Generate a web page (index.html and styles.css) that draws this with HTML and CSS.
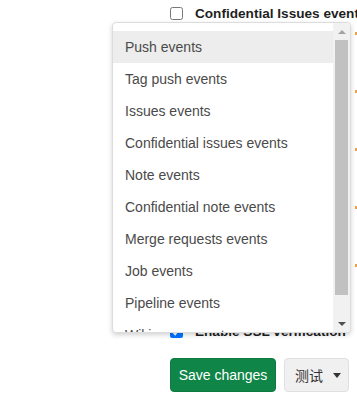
FILE: index.html
```html
<!DOCTYPE html>
<html>
<head>
<meta charset="utf-8">
<link rel="stylesheet" href="styles.css">
</head>
<body>
<div class="page">
  <div class="form">
    <label class="check-row">
      <input type="checkbox" class="cb">
      <span class="check-label">Confidential Issues events</span>
    </label>
    <div class="behind">
      <span class="mark"></span>
      <span class="mark"></span>
      <span class="mark"></span>
      <span class="mark"></span>
      <span class="mark"></span>
    </div>
    <label class="check-row ssl">
      <input type="checkbox" class="cb" checked>
      <span class="check-label">Enable SSL verification</span>
    </label>
    <div class="actions">
      <button class="btn btn-save">Save changes</button>
      <button class="btn btn-test"><span class="zh">测试</span><span class="caret"></span></button>
    </div>
  </div>

  <div class="popup">
    <ul class="list">
      <li class="item active">Push events</li>
      <li class="item">Tag push events</li>
      <li class="item">Issues events</li>
      <li class="item">Confidential issues events</li>
      <li class="item">Note events</li>
      <li class="item">Confidential note events</li>
      <li class="item">Merge requests events</li>
      <li class="item">Job events</li>
      <li class="item">Pipeline events</li>
      <li class="item">Wiki page events</li>
    </ul>
    <div class="scrollbar">
      <div class="sb-btn"><span class="arrow-up"></span></div>
      <div class="sb-track"><div class="sb-thumb"></div></div>
      <div class="sb-btn"><span class="arrow-down"></span></div>
    </div>
  </div>
</div>
</body>
</html>
```

FILE: styles.css
```css
html, body {
  margin: 0;
  padding: 0;
  background: #fff;
}
body {
  font-family: "Liberation Sans", Arial, sans-serif;
  font-size: 14px;
  color: #333;
  overflow: hidden;
  width: 357px;
  height: 400px;
}
.page {
  position: relative;
  width: 357px;
  height: 400px;
  overflow: hidden;
}
.form {
  display: flex;
  flex-direction: column;
  padding: 6px 0 0 170px;
}
.check-row {
  display: flex;
  align-items: center;
  gap: 12px;
  height: 14px;
  white-space: nowrap;
}
.cb {
  width: 13px;
  height: 13px;
  margin: 0;
  flex: none;
}
.check-label {
  font-weight: bold;
  color: #1f1f1f;
  font-size: 13.6px;
}
.behind {
  height: 304px;
  display: flex;
  flex-direction: column;
  align-items: flex-end;
  padding-top: 12px;
  gap: 55px;
  box-sizing: border-box;
}
.mark {
  width: 2px;
  height: 3px;
  background: #f0a040;
}
.actions {
  display: flex;
  gap: 8px;
  margin-top: 20px;
}
.btn {
  font-family: "Liberation Sans", Arial, sans-serif;
  font-size: 14px;
  height: 34px;
  border-radius: 4px;
  box-sizing: border-box;
  padding: 0;
  display: flex;
  align-items: center;
  white-space: nowrap;
  cursor: pointer;
}
.btn-save {
  background: #108548;
  color: #fff;
  border: 1px solid #0e7a41;
  width: 106px;
  justify-content: center;
}
.btn-test {
  background: #f0f0f0;
  color: #333;
  border: 1px solid #e0e0e0;
  width: 65px;
  padding: 0 0 0 10px;
  gap: 10px;
}
.zh {
  font-family: "Noto Sans CJK SC", sans-serif;
  font-size: 14px;
  color: #333;
}
.caret {
  width: 0;
  height: 0;
  border-left: 4px solid transparent;
  border-right: 4px solid transparent;
  border-top: 5px solid #333;
}
.popup {
  position: absolute;
  left: 112px;
  top: 22px;
  width: 239px;
  height: 311px;
  box-sizing: border-box;
  background: #fff;
  border: 1px solid #dcdcdc;
  border-radius: 4px;
  box-shadow: 0 2px 5px rgba(0, 0, 0, 0.18);
  display: flex;
  overflow: hidden;
}
.list {
  list-style: none;
  margin: 0;
  padding: 8px 0 0 0;
  flex: 1;
  overflow: hidden;
}
.item {
  height: 32px;
  line-height: 32px;
  padding-left: 12px;
  color: #4a4a4a;
  white-space: nowrap;
}
.item.active {
  background: #ededed;
}
.scrollbar {
  width: 17px;
  flex: none;
  background: #f1f1f1;
  display: flex;
  flex-direction: column;
}
.sb-btn {
  height: 17px;
  display: flex;
  align-items: center;
  justify-content: center;
  flex: none;
}
.sb-track {
  flex: 1;
  padding: 0 2px;
  display: flex;
  flex-direction: column;
}
.sb-thumb {
  height: 255px;
  background: #c1c1c1;
}
.arrow-up {
  width: 0;
  height: 0;
  border-left: 4px solid transparent;
  border-right: 4px solid transparent;
  border-bottom: 4px solid #a3a3a3;
}
.arrow-down {
  width: 0;
  height: 0;
  border-left: 4px solid transparent;
  border-right: 4px solid transparent;
  border-top: 4px solid #505050;
}
```
